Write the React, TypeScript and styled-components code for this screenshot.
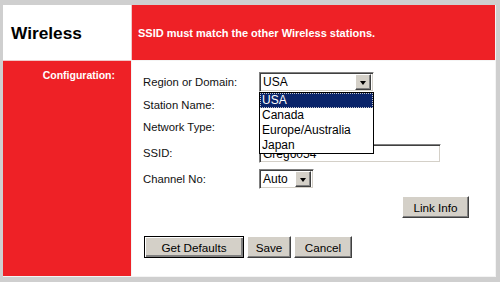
import styled, { createGlobalStyle } from "styled-components";

const GlobalStyle = createGlobalStyle`
  html, body {
    margin: 0;
    padding: 0;
    background: #cfcfcf;
  }
  body {
    font-family: "Liberation Sans", Arial, sans-serif;
  }
`;

const RED = "#ee2126";
const FACE = "#d4d0c8";

const regions = ["USA", "Canada", "Europe/Australia", "Japan"];

export default function App() {
  return (
    <>
      <GlobalStyle />
      <Frame>
        <Layout>
          <TitleCell>Wireless</TitleCell>
          <NoticeCell>SSID must match the other Wireless stations.</NoticeCell>
          <SideCell>Configuration:</SideCell>
          <FormCell>
            <FormGrid>
              <Label $h={22}>Region or Domain:</Label>
              <Field $h={22}>
                <SelectWrap>
                  <Select $w={115}>
                    <SelectValue>USA</SelectValue>
                    <ArrowButton>
                      <Triangle />
                    </ArrowButton>
                  </Select>
                  <OptionList>
                    {regions.map((r, i) => (
                      <Option key={r} $selected={i === 0}>
                        {r}
                      </Option>
                    ))}
                  </OptionList>
                </SelectWrap>
              </Field>

              <Label $h={24}>Station Name:</Label>
              <Field $h={24} />

              <Label $h={20}>Network Type:</Label>
              <Field $h={20} />

              <Label $h={32}>SSID:</Label>
              <Field $h={32}>
                <TextInput>Greg6054</TextInput>
              </Field>

              <Label $h={20}>Channel No:</Label>
              <Field $h={20}>
                <Select $w={55}>
                  <SelectValue>Auto</SelectValue>
                  <ArrowButton>
                    <Triangle />
                  </ArrowButton>
                </Select>
              </Field>
            </FormGrid>

            <LinkRow>
              <Button $w={67}>Link Info</Button>
            </LinkRow>

            <ActionRow>
              <Button $w={100} $default>
                Get Defaults
              </Button>
              <Button $w={44}>Save</Button>
              <Button $w={58}>Cancel</Button>
            </ActionRow>
          </FormCell>
        </Layout>
      </Frame>
    </>
  );
}

const Frame = styled.div`
  width: 500px;
  height: 282px;
  box-sizing: border-box;
  padding: 5px 4px 6px 3px;
`;

const Layout = styled.div`
  display: grid;
  grid-template-columns: 128px 1fr;
  grid-template-rows: 55px 1fr;
  height: 100%;
  border-right: 1px solid #f4f4f4;
  border-bottom: 1px solid #f4f4f4;
`;

const TitleCell = styled.div`
  background: #ffffff;
  display: flex;
  align-items: center;
  padding-left: 8px;
  padding-top: 1px;
  font-size: 17.3px;
  font-weight: bold;
  color: #000;
`;

const NoticeCell = styled.div`
  background: ${RED};
  display: flex;
  align-items: center;
  padding-left: 6px;
  padding-top: 1px;
  font-size: 11px;
  font-weight: bold;
  color: #fff;
  border-left: 1px solid #f0c8c8;
`;

const SideCell = styled.div`
  background: ${RED};
  color: #fff;
  font-size: 10.5px;
  font-weight: bold;
  text-align: right;
  padding: 8px 16px 0 0;
  border-top: 1px solid #f0c8c8;
`;

const FormCell = styled.div`
  background: #fff;
  padding: 10px 26px 0 11px;
  display: flex;
  flex-direction: column;
  border-top: 1px solid #f4f4f4;
  border-left: 1px solid #f4f4f4;
`;

const FormGrid = styled.div`
  display: grid;
  grid-template-columns: 116px 1fr;
`;

const Label = styled.div<{ $h: number }>`
  height: ${(p) => p.$h}px;
  display: flex;
  align-items: center;
  font-size: 11.3px;
  color: #111;
`;

const Field = styled.div<{ $h: number }>`
  height: ${(p) => p.$h}px;
  display: flex;
  align-items: center;
`;

const SelectWrap = styled.div`
  position: relative;
`;

const sunken = `
  box-sizing: border-box;
  border: 1px solid;
  border-color: #808080 #ffffff #ffffff #808080;
  box-shadow: inset 1px 1px 0 #404040, inset -1px -1px 0 ${FACE};
  background: #fff;
`;

const Select = styled.div<{ $w: number }>`
  ${sunken}
  width: ${(p) => p.$w}px;
  height: 20px;
  display: flex;
  align-items: center;
  padding: 2px;
`;

const SelectValue = styled.span`
  flex: 1;
  font-size: 12px;
  color: #000;
  padding-left: 1px;
`;

const ArrowButton = styled.div`
  box-sizing: border-box;
  width: 16px;
  height: 16px;
  background: ${FACE};
  border: 1px solid;
  border-color: #ffffff #404040 #404040 #ffffff;
  box-shadow: inset -1px -1px 0 #808080;
  display: flex;
  align-items: center;
  justify-content: center;
`;

const Triangle = styled.span`
  width: 0;
  height: 0;
  border-left: 3.5px solid transparent;
  border-right: 3.5px solid transparent;
  border-top: 4px solid #000;
  margin-top: 1px;
`;

const OptionList = styled.div`
  position: absolute;
  top: 20px;
  left: 0;
  width: 115px;
  box-sizing: border-box;
  background: #fff;
  border: 1px solid #000;
  z-index: 2;
  padding: 0;
`;

const Option = styled.div<{ $selected?: boolean }>`
  height: 15px;
  line-height: 14px;
  padding-left: 2px;
  font-size: 12px;
  box-sizing: border-box;
  color: ${(p) => (p.$selected ? "#fff" : "#000")};
  background: ${(p) => (p.$selected ? "#0a246a" : "transparent")};
  outline: ${(p) => (p.$selected ? "1px dotted #c8c8c8" : "none")};
  outline-offset: -1px;
`;

const TextInput = styled.div`
  ${sunken}
  width: 182px;
  height: 19px;
  font-size: 12px;
  padding: 3px 3px 0;
  color: #000;
  line-height: 13px;
`;

const LinkRow = styled.div`
  display: flex;
  justify-content: flex-end;
  margin-top: 7px;
`;

const ActionRow = styled.div`
  display: flex;
  gap: 3px;
  margin-top: 18px;
  margin-left: 1px;
`;

const Button = styled.div<{ $w: number; $default?: boolean }>`
  box-sizing: border-box;
  width: ${(p) => p.$w}px;
  height: 22px;
  background: ${FACE};
  display: flex;
  align-items: center;
  justify-content: center;
  font-size: 11.7px;
  color: #000;
  border: 1px solid;
  border-color: ${(p) =>
    p.$default ? "#000" : "#ffffff #404040 #404040 #ffffff"};
  box-shadow: ${(p) =>
    p.$default
      ? "inset 1px 1px 0 #fff, inset -2px -2px 0 #808080"
      : "inset -1px -1px 0 #808080"};
`;
